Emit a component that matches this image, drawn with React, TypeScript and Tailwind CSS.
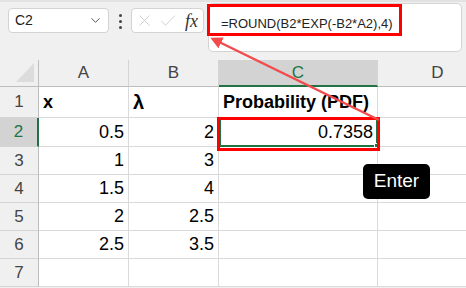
import React from "react";
import { ChevronDown, X, Check } from "lucide-react";

const cellFont = { fontFamily: '"Liberation Sans", Arial, sans-serif' };

function Cell({
  children,
  className = "",
}: {
  children?: React.ReactNode;
  className?: string;
}) {
  return (
    <div
      className={
        "flex items-center border-r border-b border-[#dadada] bg-white text-[18px] text-black overflow-visible whitespace-nowrap " +
        className
      }
    >
      {children}
    </div>
  );
}

function ColHead({ label, selected = false }: { label: string; selected?: boolean }) {
  return (
    <div
      className={
        "flex items-center justify-center text-[17px] border-r border-[#d4d4d4] " +
        (selected
          ? "bg-[#d3d3d3] text-[#217346] border-b-2 border-b-[#217346]"
          : "bg-[#f0f0f0] text-[#444] border-b border-b-[#bdbdbd]")
      }
    >
      {label}
    </div>
  );
}

function RowHead({ label, selected = false }: { label: number; selected?: boolean }) {
  return (
    <div
      className={
        "flex items-center justify-center text-[17px] border-b border-[#d4d4d4] " +
        (selected
          ? "bg-[#d3d3d3] text-[#217346] border-r-2 border-r-[#217346]"
          : "bg-[#f0f0f0] text-[#444] border-r border-r-[#bdbdbd]")
      }
    >
      {label}
    </div>
  );
}

export default function App() {
  const rows: [string, string][] = [
    ["1", "3"],
    ["1.5", "4"],
    ["2", "2.5"],
    ["2.5", "3.5"],
    ["", ""],
  ];
  return (
    <div
      className="relative w-[466px] h-[288px] overflow-hidden bg-[#f0f0f0]"
      style={cellFont}
    >
      <div className="h-[2px] bg-[#e2e2e2]" />
      {/* toolbar */}
      <div className="flex items-start h-[58px] pl-[8px]">
        <div className="mt-[6px] w-[101px] h-[25px] bg-white border border-[#d3d3d3] rounded-[4px] flex items-center justify-between pl-[6px] pr-[5px]">
          <span className="text-[14px] text-[#222]">C2</span>
          <ChevronDown size={15} strokeWidth={1.6} className="text-[#555]" />
        </div>
        <div className="mt-[12px] ml-[8px] w-[6px] flex flex-col items-center gap-[3px]">
          <div className="w-[3px] h-[3px] rounded-full bg-[#444]" />
          <div className="w-[3px] h-[3px] rounded-full bg-[#444]" />
          <div className="w-[3px] h-[3px] rounded-full bg-[#444]" />
        </div>
        <div className="mt-[6px] ml-[8px] w-[73px] h-[25px] bg-white border border-[#d3d3d3] rounded-[4px] flex items-center pl-[3px]">
          <X size={19} strokeWidth={1} className="text-[#c4c4c4]" />
          <Check size={20} strokeWidth={1} className="text-[#c4c4c4] ml-[4px]" />
          <span
            className="ml-[7px] text-[18px] italic text-[#333] leading-none"
            style={{ fontFamily: '"Liberation Serif", "Times New Roman", serif' }}
          >
            fx
          </span>
        </div>
        <div className="mt-[1px] ml-[4px] w-[254px] h-[49px] bg-white border border-[#d3d3d3] rounded-[5px] pl-[12px] pt-[7px]">
          <span className="text-[13px] text-[#222]">=ROUND(B2*EXP(-B2*A2),4)</span>
        </div>
      </div>

      {/* grid */}
      <div
        className="grid"
        style={{
          gridTemplateColumns: "39px 90px 90px 159px 120px",
          gridTemplateRows: "27px 31px 29px 28px 28px 28px 28px 28px",
        }}
      >
        <div className="relative bg-[#f0f0f0] border-r border-b border-r-[#bdbdbd] border-b-[#bdbdbd]">
          <div
            className="absolute right-[4px] bottom-[4px] w-[18px] h-[19px] bg-[#dcdcdc]"
            style={{ clipPath: "polygon(100% 0, 100% 100%, 0 100%)" }}
          />
        </div>
        <ColHead label="A" />
        <ColHead label="B" />
        <ColHead label="C" selected />
        <ColHead label="D" />

        <RowHead label={1} />
        <Cell className="pl-[4px] font-bold">x</Cell>
        <Cell className="pl-[4px] font-bold text-[20px]">λ</Cell>
        <Cell className="pl-[4px] font-bold text-[17px]">Probability (PDF)</Cell>
        <Cell />

        <RowHead label={2} selected />
        <Cell className="justify-end pr-[4px]">0.5</Cell>
        <Cell className="justify-end pr-[4px]">2</Cell>
        <div className="relative flex items-center justify-end pr-[3px] bg-white border-2 border-[#217346] text-[18px]">
          0.7358
          <div className="absolute -right-[3px] -bottom-[3px] w-[5px] h-[5px] bg-[#217346] border border-white" />
        </div>
        <Cell />

        {rows.map((r, i) => (
          <React.Fragment key={i}>
            <RowHead label={i + 3} />
            <Cell className="justify-end pr-[4px]">{r[0]}</Cell>
            <Cell className="justify-end pr-[4px]">{r[1]}</Cell>
            <Cell />
            <Cell />
          </React.Fragment>
        ))}
      </div>

      {/* annotations */}
      <div className="absolute left-[207px] top-[4px] w-[195px] h-[32px] border-[3px] border-[#ff0000]" />
      <div className="absolute left-[217px] top-[117px] w-[163px] h-[34px] border-[3px] border-[#ff0000]" />
      <svg className="absolute left-0 top-0" width="466" height="288">
        <defs>
          <marker
            id="ah"
            markerWidth="12"
            markerHeight="12"
            refX="9"
            refY="6"
            orient="auto"
            markerUnits="userSpaceOnUse"
          >
            <path d="M0,0 L12,6 L0,12 Z" fill="#f24b4b" />
          </marker>
        </defs>
        <line
          x1="379"
          y1="120"
          x2="213"
          y2="39"
          stroke="#f24b4b"
          strokeWidth="2.5"
          markerEnd="url(#ah)"
        />
      </svg>
      <div className="absolute left-[363px] top-[164px] w-[67px] h-[35px] rounded-[5px] bg-black flex items-center justify-center">
        <span className="text-white text-[19px]">Enter</span>
      </div>
    </div>
  );
}
